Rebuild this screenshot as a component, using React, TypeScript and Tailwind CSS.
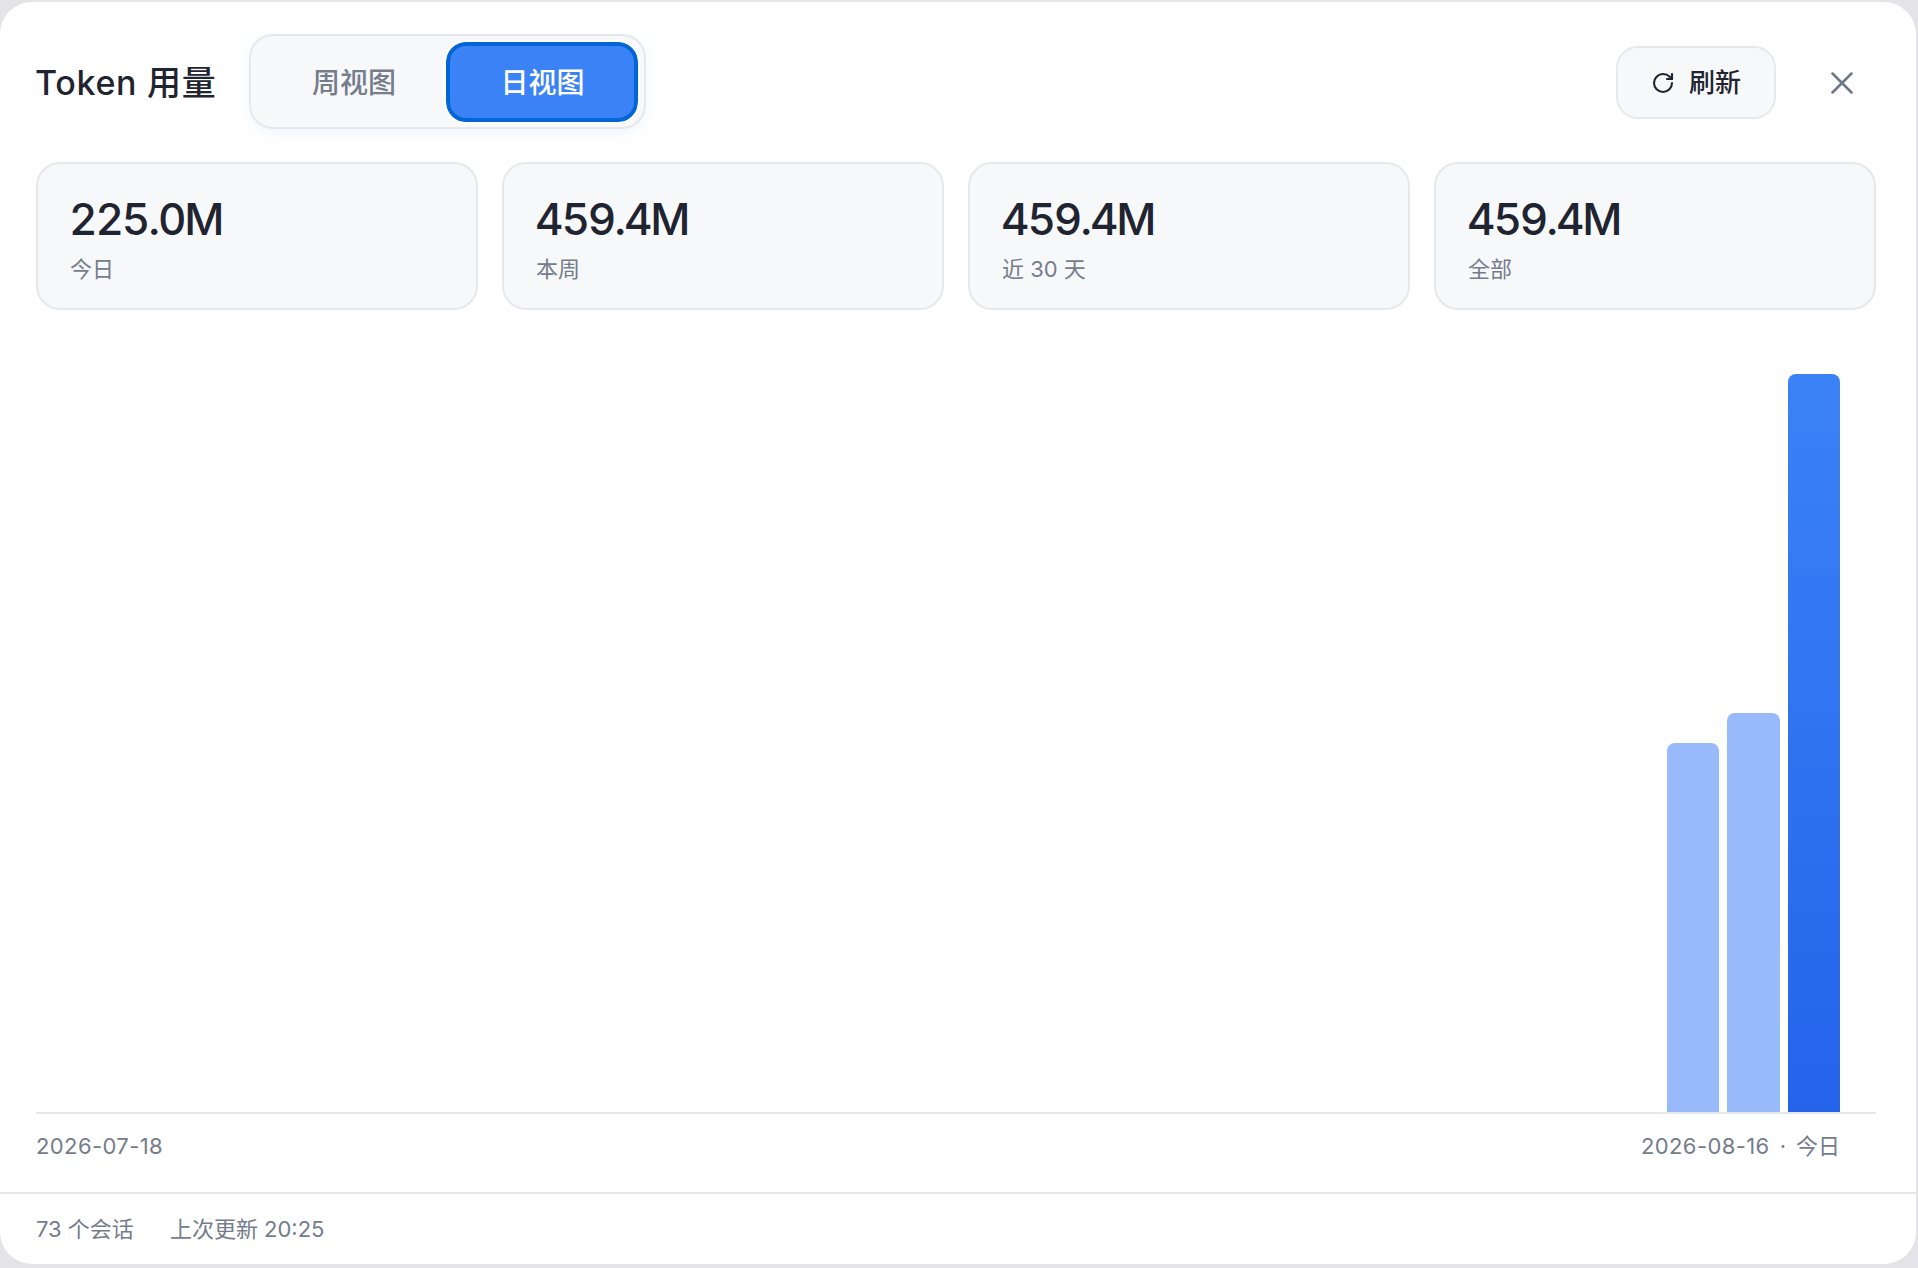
import { RotateCw } from 'lucide-react';

const stats = [
  { value: '225.0M', label: '今日' },
  { value: '459.4M', label: '本周' },
  { value: '459.4M', label: '近 30 天' },
  { value: '459.4M', label: '全部' },
];

// 30 days, only the last three have usage
const bars = Array.from({ length: 30 }, (_, i) => {
  if (i === 27) return { h: 369, cls: 'bg-[#98b9fa]' };
  if (i === 28) return { h: 399, cls: 'bg-[#98b9fa]' };
  if (i === 29) return { h: 738, cls: 'bg-gradient-to-b from-[#3b82f6] to-[#2563eb]' };
  return { h: 0, cls: '' };
});

const font = { fontFamily: 'Inter, "Noto Sans CJK SC", sans-serif' };

export default function App() {
  return (
    <div style={font} className="h-[1268px] w-full bg-[#e3e3e8] pt-[2px] pr-[2px] pb-[4px]">
      <div className="flex h-full flex-col rounded-[32px] bg-white">
        <header className="flex items-center pr-[36px] pl-[36px] pt-[32px] pb-[33px]">
          <h1 className="relative top-[1px] -ml-[1px] text-[34px] leading-none font-medium tracking-[0.7px] text-[#1f2430]">Token 用量</h1>
          <div className="ml-[33px] flex h-[95px] w-[397px] items-center rounded-[24px] border-2 border-[#e7e8ec] bg-[#f7f8fa] p-[6px] shadow-[0_4px_14px_rgba(59,130,246,0.08)]">
            <button className="flex h-full flex-1 items-center justify-center pt-[2px] pl-[4px] text-[28px] font-medium text-[#757c8c]">周视图</button>
            <button className="flex h-[80px] w-[192px] items-center justify-center rounded-[20px] border-[4px] border-[#0366d6] bg-[#3b82f6] pt-[2px] text-[28px] font-medium text-white outline-2 outline-white">日视图</button>
          </div>
          <button className="relative top-[1px] ml-auto flex h-[73px] w-[160px] items-center justify-center gap-[14px] rounded-[22px] border-2 border-[#e7e8ec] bg-[#f7f8fa] text-[26px] font-medium text-[#1f2430]">
            <RotateCw size={24} strokeWidth={2.1} />
            刷新
          </button>
          <button className="relative top-[1px] ml-[55px] mr-[27px] flex items-center justify-center text-[#6f7686]">
            <svg width="22" height="22" viewBox="0 0 22 22" fill="none" stroke="currentColor" strokeWidth="2.5" strokeLinecap="round">
              <path d="M1.5 1.5 20.5 20.5M20.5 1.5 1.5 20.5" />
            </svg>
          </button>
        </header>

        <section className="grid grid-cols-4 gap-[24px] pr-[40px] pl-[36px]">
          {stats.map((s, i) => (
            <div key={i} className="flex h-[148px] flex-col rounded-[24px] border-2 border-[#e7e8ec] bg-[#f7f8fa] px-[32px] pt-[30px]">
              <div className="-ml-[1px] text-[44px] leading-[50px] font-[550] tracking-[-2.1px] text-[#1f2430] tabular-nums">{s.value}</div>
              <div className="mt-[10px] text-[22px] leading-[30px] text-[#757c8c]">{s.label}</div>
            </div>
          ))}
        </section>

        <section className="mr-[40px] ml-[36px] flex flex-1 items-end gap-[8px] border-b-2 border-[#e7e8ec] pr-[36px]">
          {bars.map((b, i) => (
            <div key={i} style={{ height: b.h }} className={`flex-1 rounded-t-[8px] ${b.cls}`} />
          ))}
        </section>

        <div className="flex h-[78px] items-center justify-between pr-[76px] pb-[14px] pl-[36px] text-[22px] text-[#757c8c]">
          <span className="tracking-[0.4px]">2026-07-18</span>
          <span className="flex items-center gap-[10px]">
            <span className="tracking-[0.4px]">2026-08-16</span>
            <span>·</span>
            今日
          </span>
        </div>

        <footer className="flex h-[72px] items-center gap-[36px] border-t-2 border-[#e7e8ec] px-[36px] text-[22px] text-[#757c8c]">
          <span>73 个会话</span>
          <span>上次更新 20:25</span>
        </footer>
      </div>
    </div>
  );
}
